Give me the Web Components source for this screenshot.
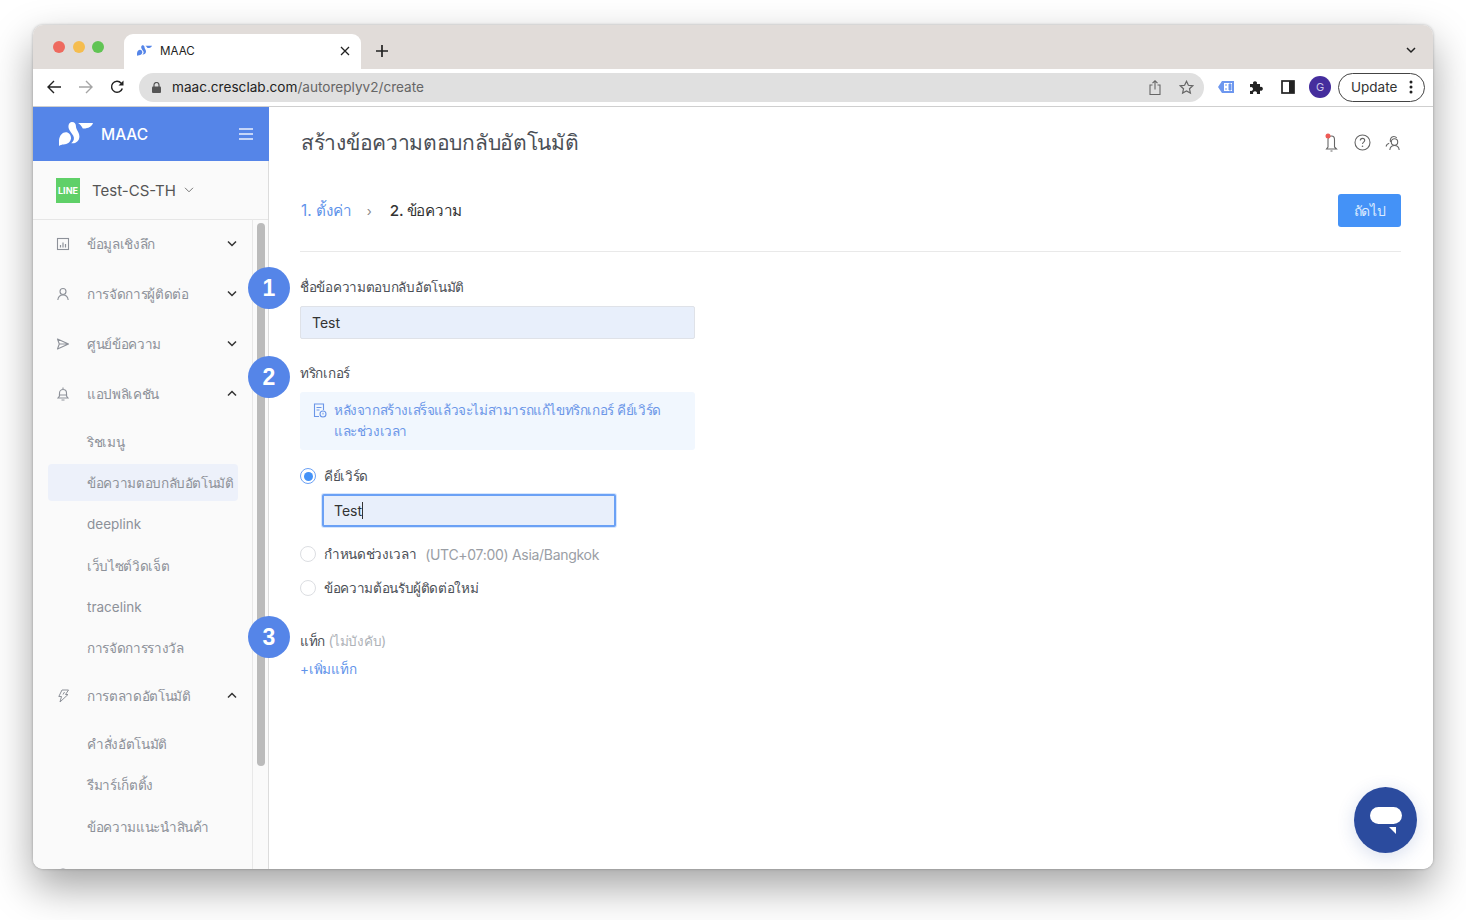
<!DOCTYPE html>
<html lang="th">
<head>
<meta charset="utf-8">
<title>MAAC</title>
<style>
  html, body { margin: 0; height: 100%; background: #fff; overflow: hidden; }
  body { font-family: Inter, "Noto Sans", sans-serif; padding: 25px 33px 0; box-sizing: border-box; }
</style>
</head>
<body>
<browser-window>
  <tab-strip slot="tabs"></tab-strip>
  <tool-bar slot="tools"></tool-bar>
  <side-nav slot="side"></side-nav>
  <autoreply-page slot="main"></autoreply-page>
</browser-window>

<script>
const FONT = 'Inter, "Noto Sans", sans-serif';

const LOGO = `<path d="M56 3H100C97 14 84 20 70 19C66 12 62 7 56 3Z" fill="currentColor"/><path d="M38 0C46 0 50 6 50 14C50 22 60 30 60 42C60 56 48 64 36 62C44 56 46 48 42 40C36 30 26 22 28 10C29 4 33 0 38 0Z" fill="currentColor"/><path d="M0 62C-2 44 8 30 20 30C30 30 37 40 35 50C33 60 24 66 14 66C8 66 4 68 0 70Z" fill="currentColor"/>`;

class BrowserWindow extends HTMLElement {
  constructor(){
    super();
    this.attachShadow({ mode: 'open' }).innerHTML = `
      <style>
        :host{ display:flex; flex-direction:column; width:1400px; height:844px; border-radius:10px; overflow:hidden; background:#fff;
               box-shadow:0 18px 42px rgba(0,0,0,.36), 0 0 3px rgba(0,0,0,.28); position:relative; font-family:${FONT}; }
        .body{ flex:1; display:flex; min-height:0; }
      </style>
      <slot name="tabs"></slot>
      <slot name="tools"></slot>
      <div class="body"><slot name="side"></slot><slot name="main"></slot></div>`;
  }
}

class TabStrip extends HTMLElement {
  constructor(){
    super();
    this.attachShadow({ mode: 'open' }).innerHTML = `
      <style>
        :host{ display:flex; align-items:flex-end; height:44px; background:#e1dcd9; padding-left:91px; position:relative; flex:none; }
        .lights{ position:absolute; left:20px; top:16px; display:flex; gap:7.700px; }
        .lights i{ width:12px; height:12px; border-radius:50%; }
        .tab{ width:237px; height:35px; background:#fff; border-radius:9px 9px 0 0; display:flex; align-items:center; box-sizing:border-box; padding:0 11px 2px 13px; font-size:11.600px; color:#222; }
        .tab svg.fav{ color:#5585e8; margin-right:8px; }
        .tab span{ flex:1; }
        .plus{ margin:0 0 12px 15px; }
        .more{ position:absolute; right:17px; top:22px; }
      </style>
      <div class="lights"><i style="background:#ee6a5f"></i><i style="background:#f5bd4f"></i><i style="background:#61c454"></i></div>
      <div class="tab">
        <svg class="fav" width="15" height="11" viewBox="0 0 100 70">${LOGO}</svg>
        <span>MAAC</span>
        <svg width="10" height="10" viewBox="0 0 10 10"><path d="M1 1l8 8M9 1l-8 8" stroke="#222" stroke-width="1.300"/></svg>
      </div>
      <svg class="plus" width="12" height="12" viewBox="0 0 12 12"><path d="M6 0v12M0 6h12" stroke="#222" stroke-width="1.700"/></svg>
      <svg class="more" width="10" height="7" viewBox="0 0 10 7"><path d="M1 1l4 4 4-4" fill="none" stroke="#222" stroke-width="1.500"/></svg>`;
  }
}

class ToolBar extends HTMLElement {
  constructor(){
    super();
    this.attachShadow({ mode: 'open' }).innerHTML = `
      <style>
        :host{ display:flex; align-items:center; height:38px; box-sizing:border-box; background:#fff; border-bottom:1px solid #cfcfcf; flex:none; padding:0 8px 1px 14px; }
        .nav{ display:flex; gap:17.500px; align-items:center; width:92px; flex:none; }
        .url{ width:1065px; height:29px; flex:none; border-radius:15px; background:#e0e0e0; display:flex; align-items:center; padding:0 10px 0 13px; box-sizing:border-box; font-size:13.600px; color:#666; }
        .url b{ font-weight:400; color:#222; }
        .url .lock{ margin-right:11px; }
        .url .txt{ flex:1; }
        .url .share{ margin-right:18px; }
        .ext{ display:flex; align-items:center; margin-left:14px; flex:none; }
        .avatar{ width:22px; height:22px; border-radius:50%; background:#452d9d; color:#c9c3e6; font-size:11px; display:flex; align-items:center; justify-content:center; }
        .update{ width:87px; height:29px; box-sizing:border-box; border:1px solid #444; border-radius:15px; display:flex; align-items:center; padding:0 11px 0 12px; font-size:13.500px; color:#333; justify-content:space-between; margin-left:7px; }
      </style>
      <div class="nav">
        <svg width="14" height="14" viewBox="0 0 14 14"><path d="M14 7H1.500M7 1L1 7l6 6" fill="none" stroke="#222" stroke-width="1.400"/></svg>
        <svg width="14" height="14" viewBox="0 0 14 14"><path d="M0 7h12.500M7 1l6 6-6 6" fill="none" stroke="#a5a5a5" stroke-width="1.400"/></svg>
        <svg width="14" height="14" viewBox="0 0 14 14"><path d="M12.300 8.500A5.500 5.500 0 1 1 11.200 3.200" fill="none" stroke="#222" stroke-width="1.500"/><path d="M13.500 .5v5h-5z" fill="#222"/></svg>
      </div>
      <div class="url">
        <svg class="lock" width="9" height="11" viewBox="0 0 9 11"><rect y="4.500" width="9" height="6.500" rx="1" fill="#555"/><path d="M2 5V3a2.500 2.500 0 0 1 5 0v2" fill="none" stroke="#555" stroke-width="1.200"/></svg>
        <span class="txt"><b>maac.cresclab.com</b>/autoreplyv2/create</span>
        <svg class="share" width="12" height="15" viewBox="0 0 12 15"><path d="M3.500 5H1v9.500h10V5H8.500M6 9.500V1M3.500 3.200L6 .8l2.500 2.400" fill="none" stroke="#666" stroke-width="1.100"/></svg>
        <svg width="15" height="15" viewBox="0 0 15 15"><path d="M7.500 1.300l1.900 4 4.300.5-3.200 3 .9 4.300-3.900-2.200-3.900 2.200.9-4.300-3.200-3 4.300-.5z" fill="none" stroke="#666" stroke-width="1.200"/></svg>
      </div>
      <div class="ext">
        <svg width="16" height="12" viewBox="0 0 16 12" style="margin-right:15px"><path d="M4 0h12v12H4L0 6z" fill="#6d97ef"/><rect x="6" y="2" width="8" height="8" fill="#fff"/><path d="M8 3v2M8 7v2M11 3h2v6h-2z" stroke="#6d97ef" fill="#6d97ef"/></svg>
        <svg width="15" height="15" viewBox="0 0 15 15" style="margin-right:17px"><path d="M1 4h3.200a2 2 0 1 1 3.600 0H11v3a2 2 0 1 1 0 3.600V14H7.800a2 2 0 1 0-3.600 0H1v-3.300a2 2 0 1 0 0-3.400z" fill="#222"/></svg>
        <svg width="14" height="14" viewBox="0 0 14 14" style="margin-right:14px"><rect x="1" y="1" width="12" height="12" fill="#fff" stroke="#222" stroke-width="1.700"/><rect x="8" y="1" width="5" height="12" fill="#222"/></svg>
        <div class="avatar">G</div>
        <div class="update">Update
          <svg width="4" height="14" viewBox="0 0 4 14"><circle cx="2" cy="2" r="1.500" fill="#222"/><circle cx="2" cy="7" r="1.500" fill="#222"/><circle cx="2" cy="12" r="1.500" fill="#222"/></svg>
        </div>
      </div>`;
  }
}

const NAV_ICONS = {
  chart: `<rect x="1.500" y="1.500" width="11" height="11" fill="none" stroke="#8d9199" stroke-width="1.100"/><path d="M4.500 10.500V8M7 10.500V5.500M9.500 10.500V7" stroke="#8d9199" stroke-width="1.200"/>`,
  user: `<circle cx="7" cy="4.500" r="3" fill="none" stroke="#8d9199" stroke-width="1.100"/><path d="M1.800 13c.4-3 2.400-5 5.200-5s4.800 2 5.200 5" fill="none" stroke="#8d9199" stroke-width="1.100"/>`,
  send: `<path d="M1.500 2l11 5-11 5 1.800-5zM3.300 7h9" fill="none" stroke="#8d9199" stroke-width="1.100" stroke-linejoin="round"/>`,
  bell: `<path d="M7 2.500a3.500 3.500 0 0 0-3.500 3.500v3L2 11h10l-1.500-2V6A3.500 3.500 0 0 0 7 2.500zM7 .5v2M2.800 8h8.400M5.500 13h3" fill="none" stroke="#8d9199" stroke-width="1.100"/>`,
  bolt: `<path d="M6 1h6.500L9.500 5.500h2.500L4 13l1.500-5.500H2.800zM8.500 3L7 5.500" fill="none" stroke="#8d9199" stroke-width="1"/>`,
  clip: `<circle cx="7" cy="7" r="6" fill="none" stroke="#8d9199" stroke-width="1.100"/>`
};

class NavGroup extends HTMLElement {
  connectedCallback(){
    const open = this.hasAttribute('open');
    this.attachShadow({ mode: 'open' }).innerHTML = `
      <style>
        :host{ display:block; }
        .row{ display:flex; align-items:center; height:50px; padding:0 15px 0 23px; font-size:13.500px; letter-spacing:-.35px; color:#8d9199; }
        .ic{ width:14px; height:14px; margin-right:17px; flex:none; }
        .t{ flex:1; white-space:nowrap; }
        .chev{ flex:none; margin-top:-2px; }
        .subs{ padding:4px 0 0; display:${open ? 'block' : 'none'}; }
      </style>
      <div class="row">
        <svg class="ic" viewBox="0 0 14 14">${NAV_ICONS[this.getAttribute('icon')]}</svg>
        <span class="t">${this.getAttribute('label')}</span>
        <svg class="chev" width="10" height="7" viewBox="0 0 10 7"><path d="${open ? 'M1 5.500l4-4 4 4' : 'M1 1.500l4 4 4-4'}" fill="none" stroke="#333" stroke-width="1.500"/></svg>
      </div>
      <div class="subs"><slot></slot></div>`;
  }
}

class NavItem extends HTMLElement {
  constructor(){
    super();
    this.attachShadow({ mode: 'open' }).innerHTML = `
      <style>
        :host{ display:flex; align-items:center; height:37px; margin:0 14px 4.400px 15px; padding-left:39px; font-size:13.500px; letter-spacing:-.35px; color:#8d9199; border-radius:4px; white-space:nowrap; overflow:hidden; }
        :host([active]){ background:#edf1fa; }
        :host([latin]){ letter-spacing:0; }
      </style>
      <slot></slot>`;
  }
}

class SideNav extends HTMLElement {
  constructor(){
    super();
    this.attachShadow({ mode: 'open' }).innerHTML = `
      <style>
        :host{ display:flex; flex-direction:column; width:236px; flex:none; background:#fafafa; box-shadow:inset -1px 0 #dcdcdc; box-sizing:border-box; overflow:hidden; position:relative; }
        .brand{ height:54px; flex:none; background:#5585e8; color:#fff; display:flex; align-items:center; padding:0 16px 0 26px; font-size:15.500px; font-weight:500; }
        .brand svg.logo{ margin-right:8px; }
        .brand span{ flex:1; }
        .acct{ height:59px; flex:none; box-sizing:border-box; border-bottom:1px solid #e6e6e6; margin-right:1px; display:flex; align-items:center; padding:0 0 0 23px; font-size:15px; color:#555; }
        .line{ width:24px; height:25px; background:#5fd068; color:#fff; font-size:9px; font-weight:700; display:flex; align-items:center; justify-content:center; margin-right:12px; }
        .acct svg{ margin-left:8px; }
        .scroll{ flex:1; min-height:0; width:220px; box-sizing:border-box; margin-top:-1px; border-right:1px solid #e8e8e8; overflow:hidden; }
        .thumb{ position:absolute; left:224px; top:116px; width:8px; height:543px; border-radius:4px; background:#bbb; }
      </style>
      <div class="brand">
        <svg class="logo" width="34" height="24" viewBox="0 0 100 70">${LOGO}</svg>
        <span>MAAC</span>
        <svg width="14" height="12" viewBox="0 0 14 12"><path d="M0 1h14M0 6h14M0 11h14" stroke="#eaf0fd" stroke-width="1.300"/></svg>
      </div>
      <div class="acct">
        <div class="line">LINE</div>Test-CS-TH
        <svg width="10" height="6" viewBox="0 0 10 6"><path d="M1 .8l4 4 4-4" fill="none" stroke="#777" stroke-width="1"/></svg>
      </div>
      <div class="scroll">
        <nav-group icon="chart" label="ข้อมูลเชิงลึก"></nav-group>
        <nav-group icon="user" label="การจัดการผู้ติดต่อ"></nav-group>
        <nav-group icon="send" label="ศูนย์ข้อความ"></nav-group>
        <nav-group icon="bell" label="แอปพลิเคชัน" open>
          <nav-item>ริชเมนู</nav-item>
          <nav-item active>ข้อความตอบกลับอัตโนมัติ</nav-item>
          <nav-item latin>deeplink</nav-item>
          <nav-item>เว็บไซต์วิดเจ็ต</nav-item>
          <nav-item latin>tracelink</nav-item>
          <nav-item>การจัดการรางวัล</nav-item>
        </nav-group>
        <nav-group icon="bolt" label="การตลาดอัตโนมัติ" open>
          <nav-item>คำสั่งอัตโนมัติ</nav-item>
          <nav-item>รีมาร์เก็ตติ้ง</nav-item>
          <nav-item>ข้อความแนะนำสินค้า</nav-item>
        </nav-group>
        <nav-group icon="clip" label="บริการเสริม"></nav-group>
      </div>
      <div class="thumb"></div>`;
  }
}

class StepBadge extends HTMLElement {
  constructor(){
    super();
    this.attachShadow({ mode: 'open' }).innerHTML = `
      <style>
        :host{ position:absolute; left:-21px; width:42px; height:42px; border-radius:50%; background:#5585e8; color:#fff; font-size:23px; font-weight:600; display:flex; align-items:center; justify-content:center; font-family:"Liberation Sans", sans-serif; z-index:2; }
      </style>
      <slot></slot>`;
  }
}

class TextBox extends HTMLElement {
  constructor(){
    super();
    this.attachShadow({ mode: 'open' }).innerHTML = `
      <style>
        :host{ display:flex; align-items:center; box-sizing:border-box; height:33px; background:#e8effb; border:1px solid #dfe2e8; border-radius:2px; padding-left:11px; font-size:14px; color:#333; }
        :host([focus]){ border:2px solid #6ba1f5; padding-left:10px; box-shadow:0 0 0 1px #d6e6fd; }
        i{ width:1px; height:17px; background:#333; display:none; }
        :host([focus]) i{ display:block; }
      </style>
      <slot></slot><i></i>`;
  }
}

class RadioOption extends HTMLElement {
  constructor(){
    super();
    this.attachShadow({ mode: 'open' }).innerHTML = `
      <style>
        :host{ display:flex; align-items:center; font-size:13.500px; letter-spacing:-.35px; color:#4b4f56; height:22px; }
        .dot{ width:14px; height:14px; border:1px solid #dcdee2; border-radius:50%; margin-right:8px; background:#fff; box-sizing:content-box; position:relative; flex:none; }
        :host([checked]) .dot{ border-color:#6ba1f5; }
        :host([checked]) .dot::after{ content:""; position:absolute; inset:2.500px; border-radius:50%; background:#4492f7; }
      </style>
      <span class="dot"></span><slot></slot>`;
  }
}

class AutoreplyPage extends HTMLElement {
  constructor(){
    super();
    this.attachShadow({ mode: 'open' }).innerHTML = `
      <style>
        :host{ display:block; flex:1; min-width:0; position:relative; background:#fff; font-family:${FONT}; overflow:visible; }
        .wrap{ padding:0 32px 0 31px; }
        .head{ height:71px; display:flex; align-items:center; justify-content:space-between; }
        h1{ margin:0 0 0 1px; font-size:21px; letter-spacing:-.3px; font-weight:400; color:#4b4f56; }
        .tools{ display:flex; gap:14px; align-items:center; }
        .steps{ height:74px; box-sizing:border-box; padding-bottom:7px; display:flex; align-items:center; border-bottom:1px solid #e9e9e9; font-size:15.200px; }
        .steps a{ color:#5f93ea; margin-left:1px; }
        .steps .sep{ margin:0 18px 0 15px; color:#888; font-size:13px; }
        .steps b{ font-weight:500; color:#333; flex:1; letter-spacing:-.3px; }
        button{ width:63px; height:33px; border:0; background:#4492f7; color:#dcebff; border-radius:3px; font:inherit; font-size:14px; letter-spacing:-.3px; padding:0; margin-bottom:1px; }
        .form{ width:395px; }
        label{ display:block; font-size:13.500px; letter-spacing:-.3px; color:#4b4f56; font-weight:500; }
        label small{ font-size:13.500px; font-weight:400; color:#aeb2b8; }
        .l1{ margin-top:24px; margin-bottom:8px; }
        .l2{ margin-top:23px; margin-bottom:8px; }
        .note{ background:#f1f7fe; border-radius:3px; height:58px; box-sizing:border-box; padding:8px 12px 8px 13px; display:flex; font-size:13.500px; letter-spacing:-.4px; line-height:21px; color:#6b96e8; white-space:nowrap; }
        .note svg{ flex:none; margin:3px 7px 0 0; }
        .opts{ margin-top:15px; }
        .kw{ width:294px; margin:7px 0 0 22px; height:33px; }
        .tz{ color:#9a9ea5; margin-left:9px; font-size:14px; letter-spacing:-.3px; }
        .add{ display:block; margin-top:6px; color:#5f93ea; font-size:13.500px; letter-spacing:-.2px; }
        .fab{ position:absolute; right:16px; bottom:16px; width:63px; height:66px; border-radius:50%; background:#2b4b9e; box-shadow:0 4px 18px rgba(43,75,158,.18); display:flex; align-items:center; justify-content:center; }
      </style>
      <step-badge style="top:160px">1</step-badge>
      <step-badge style="top:249px">2</step-badge>
      <step-badge style="top:509px">3</step-badge>
      <div class="wrap">
        <div class="head">
          <h1>สร้างข้อความตอบกลับอัตโนมัติ</h1>
          <div class="tools">
            <svg width="18" height="20" viewBox="0 0 18 20"><path d="M9.500 3c2 0 3 1.500 3 3.500v7.500l2 2H4.500l1.500-2V6.500C6 4.500 7.500 3 9.500 3zM8.500 18h2" fill="none" stroke="#666" stroke-width="1.100"/><circle cx="6" cy="3" r="2.500" fill="#ee5a55"/></svg>
            <svg width="17" height="17" viewBox="0 0 17 17"><circle cx="8.500" cy="8.500" r="7.500" fill="none" stroke="#666" stroke-width="1.100"/><path d="M6.300 6.500c0-1.300 1-2.100 2.200-2.100s2.200.8 2.200 2c0 1.700-2.200 1.700-2.200 3.600" fill="none" stroke="#666" stroke-width="1.100"/><circle cx="8.500" cy="12.300" r=".8" fill="#666"/></svg>
            <svg width="16" height="16" viewBox="0 0 16 16"><circle cx="9.500" cy="7" r="3.200" fill="none" stroke="#666" stroke-width="1.100"/><path d="M4.800 15c.3-2.800 2-4.500 4.700-4.500s4.400 1.700 4.700 4.500M5.500 7C4.800 4.500 6 1.500 8.800 1.500c1.200 0 2.200.5 2.900 1.400M1 11.500C1.400 9.800 2.600 8.700 4.200 8.300" fill="none" stroke="#666" stroke-width="1.100"/></svg>
          </div>
        </div>
        <div class="steps"><a>1. ตั้งค่า</a><span class="sep">›</span><b>2. ข้อความ</b><button>ถัดไป</button></div>
        <div class="form">
          <label class="l1">ชื่อข้อความตอบกลับอัตโนมัติ</label>
          <text-box>Test</text-box>
          <label class="l2">ทริกเกอร์</label>
          <div class="note">
            <svg width="14" height="15" viewBox="0 0 14 15"><path d="M6 13.500H1.500V1h9v6M3.500 4.500h5M3.500 7h3" fill="none" stroke="#6b96e8" stroke-width="1.100"/><circle cx="10" cy="11" r="3" fill="none" stroke="#6b96e8" stroke-width="1.100"/><path d="M10 9.800V11.500" stroke="#6b96e8"/></svg>
            <span>หลังจากสร้างเสร็จแล้วจะไม่สามารถแก้ไขทริกเกอร์ คีย์เวิร์ด<br>และช่วงเวลา</span>
          </div>
          <div class="opts">
            <radio-option checked>คีย์เวิร์ด</radio-option>
            <text-box class="kw" focus>Test</text-box>
            <radio-option style="margin-top:16px">กำหนดช่วงเวลา<span class="tz">(UTC+07:00) Asia/Bangkok</span></radio-option>
            <radio-option style="margin-top:12px">ข้อความต้อนรับผู้ติดต่อใหม่</radio-option>
          </div>
          <label style="margin-top:31px">แท็ก <small>(ไม่บังคับ)</small></label>
          <a class="add">+เพิ่มแท็ก</a>
        </div>
      </div>
      <div class="fab">
        <svg width="32" height="30" viewBox="0 0 32 30"><rect y="2" width="32" height="17" rx="8.500" fill="#fff"/><path d="M19 22h7v7z" fill="#fff"/></svg>
      </div>`;
  }
}

customElements.define('browser-window', BrowserWindow);
customElements.define('tab-strip', TabStrip);
customElements.define('tool-bar', ToolBar);
customElements.define('nav-group', NavGroup);
customElements.define('nav-item', NavItem);
customElements.define('side-nav', SideNav);
customElements.define('step-badge', StepBadge);
customElements.define('text-box', TextBox);
customElements.define('radio-option', RadioOption);
customElements.define('autoreply-page', AutoreplyPage);
</script>
</body>
</html>
